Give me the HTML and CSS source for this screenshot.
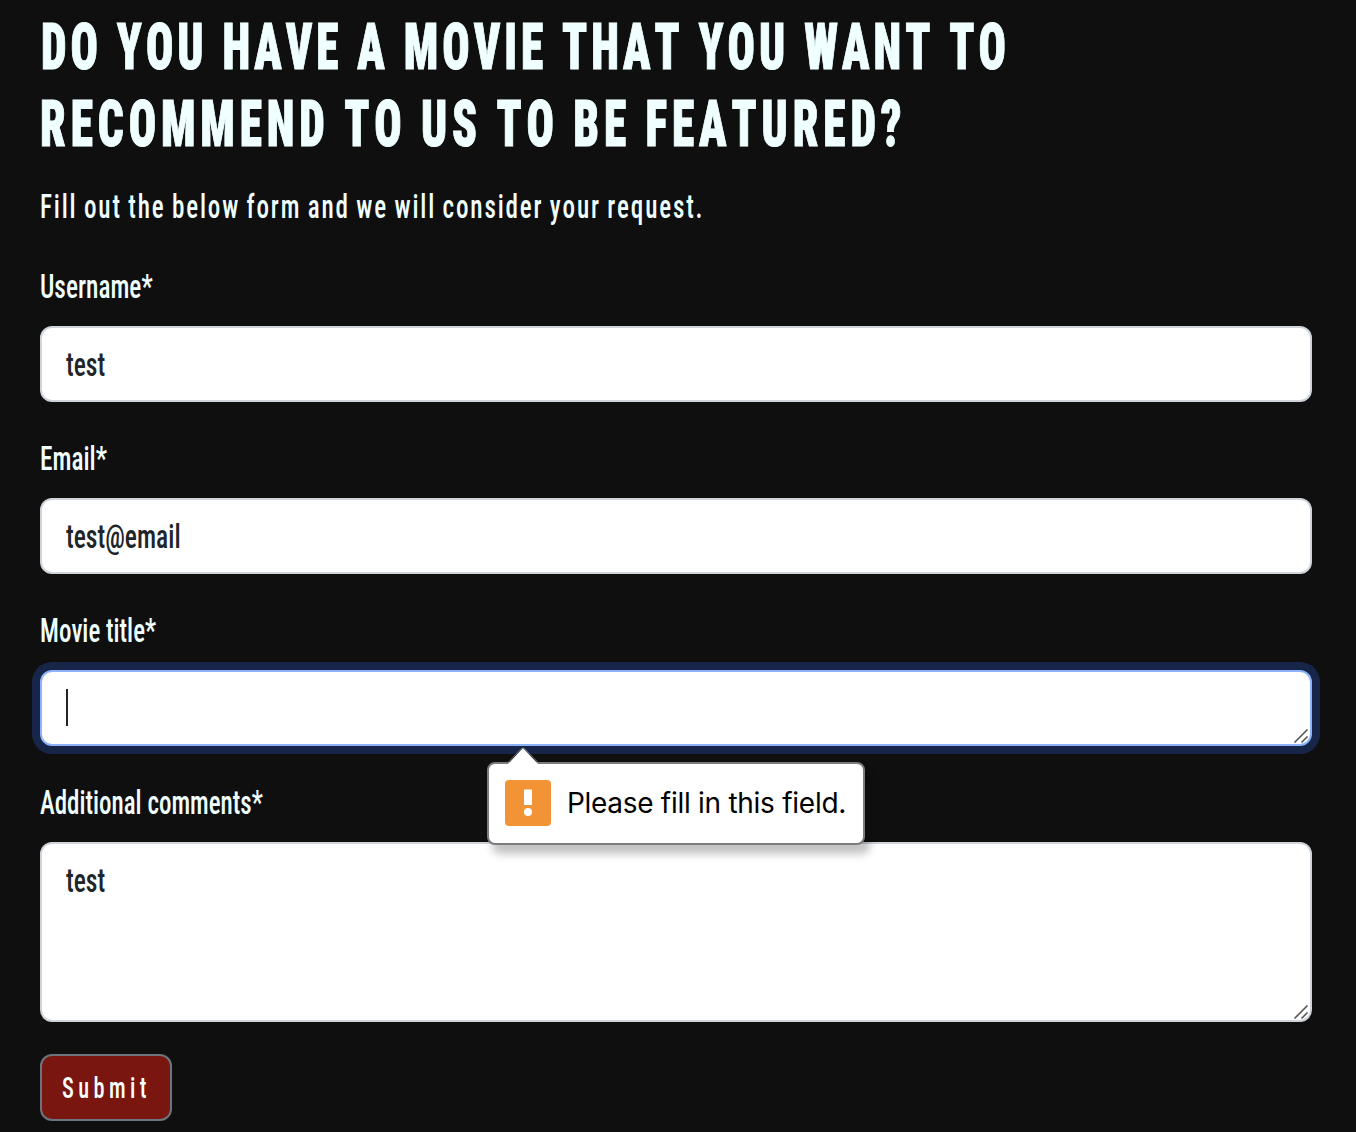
FILE: index.html
```html
<!DOCTYPE html>
<html lang="en">
<head>
<meta charset="utf-8">
<title>Recommend a movie</title>
<link rel="stylesheet" href="styles.css">
</head>
<body>
<main class="page">
  <h1 class="title">
    <span class="title-line title-line-first">DO YOU HAVE A MOVIE THAT YOU WANT TO</span>
    <span class="title-line title-line-second">RECOMMEND TO US TO BE FEATURED?</span>
  </h1>
  <p class="intro"><span class="intro-text">Fill out the below form and we will consider your request.</span></p>
  <form class="form">
    <div class="group">
      <div class="label"><span class="narrow">Username*</span></div>
      <div class="field"><span class="narrow value">test</span></div>
    </div>
    <div class="group">
      <div class="label"><span class="narrow">Email*</span></div>
      <div class="field"><span class="narrow value">test@email</span></div>
    </div>
    <div class="group">
      <div class="label"><span class="narrow label-movie">Movie title*</span></div>
      <div class="field field-focus">
        <span class="caret"></span>
        <svg class="grip" width="16" height="16" viewBox="0 0 16 16"><path d="M1.5 14.5 14.5 1.5M8.5 14.5l6-6"/></svg>
        <div class="callout" role="alert">
          <svg class="callout-arrow" width="36" height="18" viewBox="0 0 36 18"><path class="arrow-fill" d="M2 18 18 1 34 18z"/><path class="arrow-edge" d="M2 16.5 16.6 1.6Q18 .2 19.4 1.6L34 16.5"/></svg>
          <svg class="callout-icon" width="46" height="46" viewBox="0 0 46 46"><rect width="46" height="46" rx="4" fill="#f29436"/><path d="M19 9.5h8v15.5h-8z" fill="#fff"/><circle cx="23" cy="32" r="4" fill="#fff"/></svg>
          <span class="callout-text">Please fill in this field.</span>
        </div>
      </div>
    </div>
    <div class="group">
      <div class="label"><span class="narrow label-comments">Additional comments*</span></div>
      <div class="field field-tall">
        <span class="narrow value">test</span>
        <svg class="grip" width="16" height="16" viewBox="0 0 16 16"><path d="M1.5 14.5 14.5 1.5M8.5 14.5l6-6"/></svg>
      </div>
    </div>
    <button class="submit" type="button"><span class="submit-text">Submit</span></button>
  </form>
</main>
</body>
</html>
```

FILE: styles.css
```css
* { box-sizing: border-box; }

body {
  margin: 0;
  background: #0f0f0f;
  color: #f0ffff;
  font-family: Roboto, "Liberation Sans", sans-serif;
  font-stretch: 75%;
  font-kerning: none;
  overflow: hidden;
}

.page { padding: 10px 44px 0 40px; }

.title {
  margin: 0;
  font-size: 64px;
  font-weight: 900;
  line-height: 76.8px;
  -webkit-text-stroke: 1px #f0ffff;
}

.title-line {
  display: block;
  width: max-content;
  white-space: nowrap;
  transform-origin: 0 0;
}

.title-line-first {
  margin-left: 0.6px;
  letter-spacing: 5.63px;
  word-spacing: 0.6px;
  transform: scaleX(0.71);
}

.title-line-second {
  letter-spacing: 6.9px;
  word-spacing: -1.4px;
  transform: scaleX(0.71);
}

.intro {
  margin: 19px 0 31.4px;
  font-size: 33px;
  font-weight: 500;
  line-height: 48px;
}

.intro-text {
  display: block;
  width: max-content;
  letter-spacing: 2.39px;
  word-spacing: -1.45px;
  transform: scaleX(0.761);
  transform-origin: 0 0;
}

.form { display: flex; flex-direction: column; gap: 32px; }

.group { display: flex; flex-direction: column; gap: 16px; }

.label {
  height: 48px;
  font-size: 33px;
  font-weight: 500;
  line-height: 49px;
}

.narrow {
  display: block;
  width: max-content;
  transform: scaleX(0.768);
  transform-origin: 0 0;
}

.label-movie { transform: scaleX(0.757); }
.label-comments { margin-left: -0.5px; transform: scaleX(0.757); }

.field {
  position: relative;
  height: 76px;
  padding: 13px 24px 11px;
  border: 2px solid #ced4da;
  border-radius: 12px;
  background: #fff;
  color: #212529;
  font-size: 33px;
  line-height: 48px;
}

.value { transform: scaleX(0.775); font-weight: 500; }

.field-tall { height: 180px; }

.field-focus {
  border-color: #8cb3fa;
  box-shadow: 0 0 0 8px #172548;
}

.caret {
  display: block;
  width: 2px;
  height: 37px;
  margin-top: 4px;
  background: #212529;
}

.grip {
  position: absolute;
  right: 1px;
  bottom: 0;
  fill: none;
  stroke: #555;
  stroke-width: 1.6;
}

.callout {
  position: absolute;
  z-index: 2;
  left: 445px;
  top: 90px;
  display: flex;
  align-items: center;
  gap: 16px;
  width: 378px;
  height: 83px;
  padding: 0 16px;
  border: 2px solid #7c7c7c;
  border-radius: 8px;
  background: #fff;
  box-shadow: 5px 9px 8px rgba(0, 0, 0, 0.24);
  color: #000;
}

.callout-arrow { position: absolute; left: 16px; top: -17px; }
.arrow-fill { fill: #fff; }
.arrow-edge { fill: none; stroke: #7c7c7c; stroke-width: 1; }

.callout-icon { flex: none; }

.callout-text {
  font-family: Inter, "Liberation Sans", sans-serif;
  font-size: 28px;
  font-stretch: 100%;
  letter-spacing: -0.27px;
  white-space: nowrap;
}

.submit {
  align-self: flex-start;
  width: 132px;
  height: 67px;
  padding: 1px 0 0 20px;
  border: 2px solid #6c757d;
  border-radius: 12px;
  background: #79160f;
  color: #f8ffff;
  font: 500 29px/46px Roboto, "Liberation Sans", sans-serif;
  font-stretch: 75%;
  text-align: left;
}

.submit-text {
  display: block;
  width: max-content;
  letter-spacing: 5.7px;
  transform: scaleX(0.77);
  transform-origin: 0 0;
}
```
